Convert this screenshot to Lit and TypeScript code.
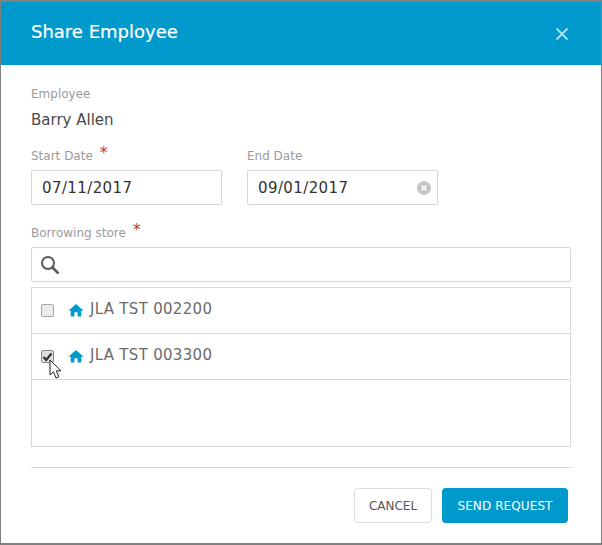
import { LitElement, html, css } from "lit";
import { customElement } from "lit/decorators.js";

@customElement("app-root")
export class AppRoot extends LitElement {
  static styles = css`
    :host { display: block; width: 602px; height: 545px; background: #808080; font-family: "DejaVu Sans", Verdana, sans-serif; overflow: hidden; }
    * { box-sizing: border-box; }
    .dialog { position: relative; margin: 2px 1px 0 1px; width: 600px; height: 541px; background: #fff; display: flex; flex-direction: column; }
    .head { height: 63px; flex: none; background: #0099cc; display: flex; align-items: center; justify-content: space-between; padding: 0 32px 2px 30px; color: #fff; }
    .head h1 { margin: 0; font-size: 18px; font-weight: 400; line-height: 24px; position: relative; top: -1px; -webkit-text-stroke: 0.2px #fff; }
    .close { display: block; margin-top: 2px; }
    .body { padding: 21px 30px 0; display: flex; flex-direction: column; flex: 1; }
    label { display: block; font-size: 12px; line-height: 16px; color: #9b9b9b; }
    .star { color: #c0392b; font-size: 16px; line-height: 10px; margin-left: 3px; position: relative; top: -2px; }
    .name { font-size: 15px; line-height: 20px; color: #4a4a4a; margin-top: 8px; }
    .dates { display: flex; gap: 25px; margin-top: 18px; }
    .field { width: 191px; display: flex; flex-direction: column; gap: 6px; }
    .input { position: relative; height: 35px; border: 1px solid #d8d8d8; border-radius: 2px; font-size: 15px; letter-spacing: 0.4px; color: #333; display: flex; align-items: center; justify-content: space-between; padding: 1px 6px 0 10px; }
    .clear { width: 14px; height: 14px; border-radius: 50%; background: #c4c4c4; display: flex; align-items: center; justify-content: center; }
    .store { margin-top: 20px; }
    .search { height: 35px; border: 1px solid #d8d8d8; border-radius: 2px; margin-top: 6px; display: flex; align-items: center; padding-left: 8px; }
    .list { height: 160px; border: 1px solid #d8d8d8; margin-top: 5px; }
    .row { height: 46px; border-bottom: 1px solid #d8d8d8; display: flex; align-items: center; padding-left: 9px; font-size: 15px; letter-spacing: 0.3px; color: #6b6b6b; }
    .box { width: 13px; height: 13px; border: 1px solid #a6a6a6; border-radius: 2px; background: #ececec; display: flex; align-items: center; justify-content: center; flex: none; }
    .box.on { background: #dedede; border-color: #8a8a8a; }
    .home { margin: -1px 6px 0 14px; flex: none; }
    .text { position: relative; top: -2px; }
    hr { border: 0; border-top: 1px solid #d8d8d8; margin: 20px 0 0; height: 0; }
    .actions { display: flex; justify-content: flex-end; gap: 10px; margin-top: 20px; padding-right: 3px; }
    button { height: 35px; border-radius: 4px; font: 12px "DejaVu Sans", Verdana, sans-serif; padding: 0; }
    .cancel { width: 78px; background: #fff; border: 1px solid #dcdcdc; color: #555; }
    .send { width: 126px; background: #0099cc; border: 0; color: #fff; letter-spacing: 0.1px; }
    .cursor { position: absolute; left: 48px; top: 357px; }
  `;

  render() {
    const home = html`<svg class="home" width="16" height="14" viewBox="0 0 16 14"><path fill="#0099cc" d="M8 1 L15.5 7.8 H13.3 V13.5 H9.6 V9.2 H6.4 V13.5 H2.7 V7.8 H.5 Z"/></svg>`;
    return html`
      <div class="dialog">
        <div class="head">
          <h1>Share Employee</h1>
          <svg class="close" width="14" height="14" viewBox="0 0 14 14"><path d="M1.5 1.5 L12.5 12.5 M12.5 1.5 L1.5 12.5" stroke="#a9dcee" stroke-width="2" fill="none"/></svg>
        </div>
        <div class="body">
          <label>Employee</label>
          <div class="name">Barry Allen</div>
          <div class="dates">
            <div class="field">
              <label>Start Date <span class="star">*</span></label>
              <div class="input">07/11/2017</div>
            </div>
            <div class="field">
              <label>End Date</label>
              <div class="input">09/01/2017
                <span class="clear"><svg width="8" height="8" viewBox="0 0 8 8"><path d="M1.5 1.5 L6.5 6.5 M6.5 1.5 L1.5 6.5" stroke="#fff" stroke-width="1.6"/></svg></span>
              </div>
            </div>
          </div>
          <label class="store">Borrowing store <span class="star">*</span></label>
          <div class="search">
            <svg width="20" height="20" viewBox="0 0 20 20"><circle cx="8" cy="8" r="6" fill="none" stroke="#5a5a5a" stroke-width="2"/><path d="M12.5 12.5 L18.5 18.5" stroke="#5a5a5a" stroke-width="2.6"/></svg>
          </div>
          <div class="list">
            <div class="row"><span class="box"></span>${home}<span class="text">JLA TST 002200</span></div>
            <div class="row"><span class="box on"><svg width="11" height="10" viewBox="0 0 11 10"><path d="M1.5 5 L4.2 8 L9.5 1.5" stroke="#333" stroke-width="2.2" fill="none"/></svg></span>${home}<span class="text">JLA TST 003300</span></div>
          </div>
          <hr />
          <div class="actions">
            <button class="cancel">CANCEL</button>
            <button class="send">SEND REQUEST</button>
          </div>
        </div>
        <svg class="cursor" width="14" height="22" viewBox="0 0 14 22"><path d="M1 1 V16 L4.5 12.8 L7 19 L9.8 17.8 L7.3 11.8 H12 Z" fill="#fff" stroke="#222" stroke-width="1"/></svg>
      </div>
    `;
  }
}
